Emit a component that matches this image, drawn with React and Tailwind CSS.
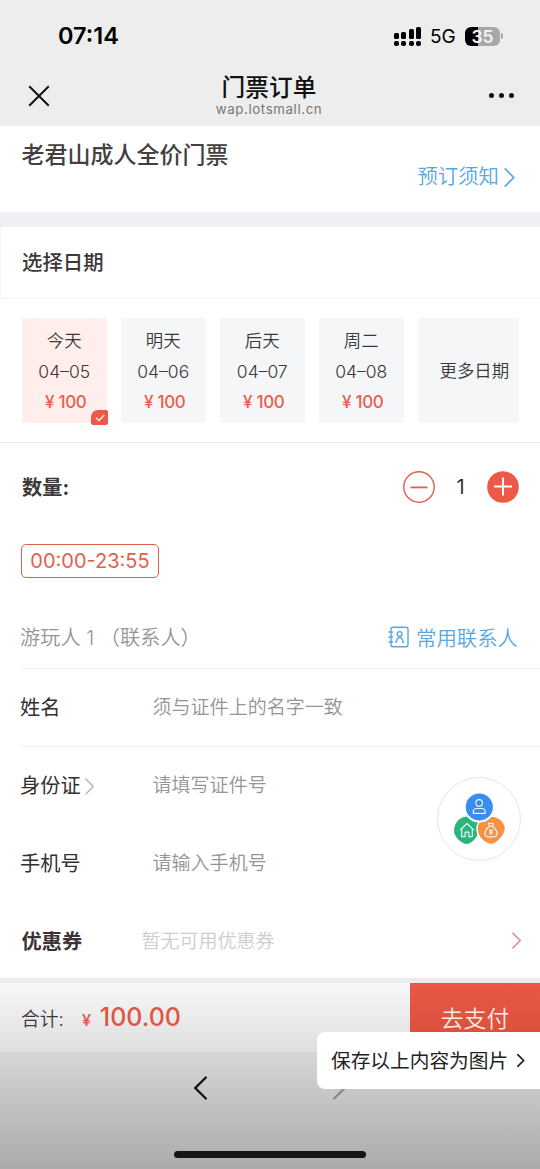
const DAYS = [
  { label: "今天", date: "04–05", price: 100 },
  { label: "明天", date: "04–06", price: 100 },
  { label: "后天", date: "04–07", price: 100 },
  { label: "周二", date: "04–08", price: 100 },
];

function Chevron({ className, width = 1.5, left = false }) {
  return (
    <svg viewBox="0 0 12 20" fill="none" stroke="currentColor" strokeWidth={width} strokeLinecap="round" className={className}>
      <path d={left ? "M11 1 2 10l9 9" : "M1 1l9 9-9 9"} />
    </svg>
  );
}

function StatusBar() {
  const bars = [6, 7, 10, 12];
  return (
    <div className="h-[72px] flex items-center justify-between pl-[58px] pr-[37px] text-black">
      <span className="text-[23.5px] leading-none font-semibold">07:14</span>
      <div className="flex items-center">
        <div className="flex items-end gap-[2.3px] h-[19px]">
          {bars.map((h) => (
            <div key={h} className="w-[5px] flex flex-col gap-[2px]">
              <div className="bg-black rounded-[1.5px]" style={{ height: h }} />
              <div className="bg-black rounded-[2px] h-[5px]" />
            </div>
          ))}
        </div>
        <span className="text-[19px] leading-none ml-[9px] w-[35px] pt-px whitespace-nowrap">5G</span>
        <div className="flex w-[35px] h-[19px] rounded-[6px] items-center justify-center bg-linear-to-r from-black from-36% to-[#a7a7a7] to-36% text-[#f2f2f2] text-[17.5px] leading-[19px] pt-px font-semibold">
          35
        </div>
        <div className="w-[2px] h-[6px] ml-px rounded-r-full bg-[#a7a7a7]" />
      </div>
    </div>
  );
}

function NavBar() {
  return (
    <div className="h-[54px] flex items-start justify-between pl-[28px] pr-[26px]">
      <svg viewBox="0 0 22 22" className="w-[22px] h-[22px] mt-[13px]" fill="none" stroke="#111" strokeWidth="2">
        <path d="M1.2 1.2l19.6 19.6M20.8 1.2L1.2 20.8" />
      </svg>
      <div className="flex flex-col items-center pt-[3px] pr-px">
        <span className="text-[23.7px] leading-[26px] font-medium text-[#111]">门票订单</span>
        <span className="text-[13.3px] leading-[16px] tracking-[0.6px] text-[#777]">wap.lotsmall.cn</span>
      </div>
      <div className="flex gap-[5px] mt-[21px]">
        <i className="w-[5px] h-[5px] rounded-full bg-[#111]" />
        <i className="w-[5px] h-[5px] rounded-full bg-[#111]" />
        <i className="w-[5px] h-[5px] rounded-full bg-[#111]" />
      </div>
    </div>
  );
}

function DayCard({ day, active }) {
  return (
    <div
      className={`relative w-[85.5px] h-[105px] rounded-[3px] flex flex-col items-center pt-[7px] ${
        active ? "bg-[#ffeeec]" : "bg-[#f4f6f8]"
      }`}
    >
      <span className="text-[17.4px] leading-[31px] text-[#3b3839] font-[350]">{day.label}</span>
      <span className="text-[17.5px] leading-[31px] text-[#3b3839] font-[350]">{day.date}</span>
      <span className="text-[17px] leading-[30px] font-medium text-[#e8604f] tracking-[-0.3px] pl-[3px]">
        ¥ {day.price}
      </span>
      {active && (
        <div className="absolute -right-[1px] -bottom-[2px] w-[17px] h-[15px] rounded-tl-[7px] rounded-[2px] bg-[#ee5947] flex items-center justify-center">
          <svg viewBox="0 0 10 8" className="w-[10px] h-[8px]" fill="none" stroke="#ffd9d2" strokeWidth="1.7">
            <path d="M1 3.7l3 2.8L9.2 1" />
          </svg>
        </div>
      )}
    </div>
  );
}

function Quantity() {
  return (
    <div className="h-[87px] flex items-center justify-between pl-[22px] pr-[21.5px]">
      <span className="text-[20.2px] font-bold text-[#3b3839] pt-[3px]">数量:</span>
      <div className="flex items-center">
        <svg viewBox="0 0 32 32" className="w-8 h-8" fill="none" stroke="#e2604f" strokeWidth="1.4">
          <circle cx="16" cy="16" r="15.2" />
          <path d="M7.5 16.4h17" strokeWidth="1.8" />
        </svg>
        <span className="w-[52px] text-center text-[20px] text-[#333]">1</span>
        <svg viewBox="0 0 32 32" className="w-8 h-8">
          <circle cx="16" cy="16" r="15.8" fill="#ee5947" />
          <path d="M7 15.5h18M16 6.5v18" stroke="#fff" strokeWidth="2" />
        </svg>
      </div>
    </div>
  );
}

function Field({ label, placeholder, arrow, border }) {
  return (
    <div className={`ml-5 pt-[2px] h-[78px] flex items-center border-b ${border ? "border-[#f3f3f3]" : "border-transparent"}`}>
      <div className="w-[132.5px] flex items-center text-[20.2px] text-[#333031]">
        {label}
        {arrow && <Chevron width={1.3} className="w-[10px] h-[17px] ml-[4px] text-[#aaa]" />}
      </div>
      <span className="text-[19.05px] text-[#959595] font-[350]">{placeholder}</span>
    </div>
  );
}

function FloatingMenu() {
  return (
    <div className="absolute left-[437px] top-[777px] w-[84px] h-[84px] rounded-full border-[1.5px] border-[#e6e6e8] bg-white">
      <svg viewBox="437 777 84 84" className="absolute -left-[1.5px] -top-[1.5px] w-[84px] h-[84px]" fill="none">
        <path fill="#29b57c" d="M468 816.5c7 0 11 3.500 11 8 0 5-1 10-3 13-2.500 3.500-6 6.500-9.500 6.500-4 0-12.500-6.500-12.500-13 0-8.500 6-14.500 14-14.500z" />
        <path
          fill="#f9913f"
          stroke="#fff"
          strokeWidth="1.500"
          d="M491 816c8.500 0 14.500 6.500 14.500 13 0 6-9.500 15.500-14 15.500-5 0-14.500-6-14.500-15.500 0-8 6-13 14-13z"
        />
        <circle cx="479.300" cy="807" r="14.600" fill="#3a8cf3" stroke="#fff" strokeWidth="2" />
        <g stroke="#e4f4ff" strokeWidth="1.200" strokeLinejoin="round">
          <circle cx="479.200" cy="803" r="3.300" />
          <path d="M473.300 813.400v-1.700q0-3.200 3.200-3.200h5.500q3.200 0 3.200 3.200v1.700z" />
          <path d="M460.200 830l6.800-6.500 6.800 6.500M461.700 829v7.700h3.400v-4.500h3.800v4.500h3.400v-7.700" />
          <path d="M488.500 823.300h5l-1.200 3q4.700 3.500 4.700 7 0 3.500-3 3.500h-6q-3 0-3-3.500 0-3.500 4.700-7zM488.800 826.400h4.400" />
          <path d="M489.500 829.500l1.500 1.500 1.500-1.500M491 831v3.700M489.300 831h3.400M489.300 832.800h3.400" />
        </g>
      </svg>
    </div>
  );
}

function BottomBar() {
  return (
    <div className="h-[69px] flex bg-linear-to-b from-[#f8f8fa] to-[#dedede]">
      <div className="flex-1 flex items-baseline pl-[21px] pt-[17px] leading-[34px]">
        <span className="text-[18.8px] text-[#3b3839] font-[350]">合计:</span>
        <span className="text-[16px] font-medium text-[#dd5647] ml-[18px]">¥</span>
        <span className="text-[25px] font-medium text-[#dd5647] ml-[9px]">100.00</span>
      </div>
      <div className="w-[130px] text-center text-[22.8px] leading-[71px] font-[350] text-[#ffe9e5] bg-linear-to-b from-[#e95844] to-[#d54e3c]">
        去支付
      </div>
    </div>
  );
}

export default function App() {
  return (
    <div className="relative w-[540px] h-[1169px] overflow-hidden bg-white font-['Inter','Noto_Sans_CJK_SC',sans-serif]">
      <div className="bg-[#ededed]">
        <StatusBar />
        <NavBar />
      </div>

      <div className="h-[86px] flex justify-between pl-[21.5px] pr-[24px]">
        <h1 className="text-[23px] leading-[30px] font-medium text-[#453f40] pt-[14px]">老君山成人全价门票</h1>
        <div className="flex items-center text-[#58a6e2] pt-[17px]">
          <span className="text-[20.4px] font-[350]">预订须知</span>
          <Chevron width={1.8} className="w-[12px] h-[19px] ml-[5px]" />
        </div>
      </div>

      <div className="h-[15px] bg-[#eff0f4]" />

      <div className="h-[72px] flex items-center px-[21px] pt-[2px] border-b border-l border-[#f5f5f6]">
        <h2 className="text-[20.4px] font-medium text-[#3b3839]">选择日期</h2>
      </div>
      <div className="h-[144px] flex gap-[13.5px] pl-[21.5px] pt-[19px] border-b border-[#e8e8e8]">
        {DAYS.map((day, i) => (
          <DayCard key={day.date} day={day} active={i === 0} />
        ))}
        <div className="w-[101px] h-[105px] rounded-[3px] bg-[#f4f6f8] pl-[22px] text-[17.4px] leading-[105px] font-[350] text-[#3b3839] whitespace-nowrap">
          更多日期
        </div>
      </div>

      <Quantity />

      <div className="h-[77px] pl-[21px] pt-[14px]">
        <div className="w-[138px] h-[34px] rounded-[5px] border-[1.5px] border-[#e2604f] text-center text-[20px] leading-[33px] text-[#e2604f]">
          00:00-23:55
        </div>
      </div>

      {/* visitor form */}
      <div className="ml-5 pr-[22px] h-[62px] flex items-center justify-between border-b border-[#f3f3f3]">
        <span className="text-[20.2px] text-[#959595] font-[350] whitespace-pre pt-px">游玩人 1 （联系人）</span>
        <div className="flex items-center gap-[7px] text-[#58a6e2]">
          <svg viewBox="0 0 21 22" className="w-[21px] h-[22px]" fill="none" stroke="currentColor" strokeWidth="1.4">
            <rect x="3" y="1.2" width="17" height="19.5" rx="2" />
            <path d="M.5 6h4.500M.5 11h4.500M.5 16h4.500" />
            <circle cx="11.7" cy="8" r="2.4" />
            <path d="M7.2 16h1.300q.3-4.400 3.200-4.400t3.200 4.400h1.300" />
          </svg>
          <span className="text-[20.4px] font-[350] pt-[3px]">常用联系人</span>
        </div>
      </div>
      <Field label="姓名" placeholder="须与证件上的名字一致" border />
      <Field label="身份证" placeholder="请填写证件号" arrow />
      <Field label="手机号" placeholder="请输入手机号" />

      <div className="h-[75px] flex items-center pl-[21.5px] pr-[18px]">
        <span className="w-[120px] text-[20.2px] font-bold text-[#3b3334] pt-[3px]">优惠券</span>
        <span className="flex-1 text-[19px] text-[#cdcdcd] font-[350] pt-[4px]">暂无可用优惠券</span>
        <Chevron width={1.6} className="w-[10px] h-[17px] text-[#d9877d]" />
      </div>
      <div className="h-[5px] bg-[#ebecef]" />

      <BottomBar />
      <div className="relative h-[117px] bg-linear-to-b from-[#d6d6d6] to-[#ababab] flex justify-center">
        <Chevron left width={2} className="w-[14px] h-[24px] mt-[24px] text-[#111]" />
        <Chevron width={2} className="w-[14px] h-[24px] mt-[24px] ml-[126px] text-[#888]" />
        <div className="absolute left-[174px] bottom-[11px] w-[192px] h-[7px] rounded-full bg-[#151515]" />
      </div>

      <FloatingMenu />
      <div className="absolute left-[317px] top-[1032px] w-[223px] h-[57px] rounded-l-[8px] bg-white flex items-center pl-[14px] text-[#222]">
        <span className="text-[19.7px] pt-[2px]">保存以上内容为图片</span>
        <Chevron width={2.6} className="w-[8px] h-[13px] ml-[9px]" />
      </div>
    </div>
  );
}
